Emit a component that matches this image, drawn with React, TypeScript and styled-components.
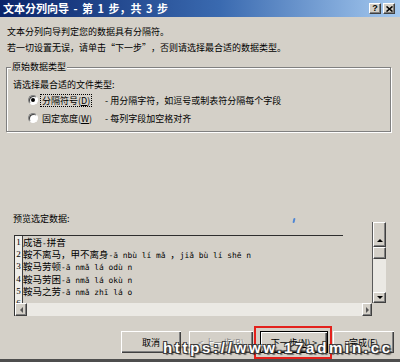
import React from "react";
import styled, { createGlobalStyle } from "styled-components";

const Global = createGlobalStyle`
  html, body { margin: 0; padding: 0; background: #d4d0c8; }
  body { font-family: "Noto Sans CJK SC", "Liberation Sans", sans-serif; }
`;

const Window = styled.div`
  position: relative;
  width: 400px;
  height: 362px;
  box-sizing: border-box;
  background: #d4d0c8;
  border-bottom: 3px solid #4e4e4e;
  display: flex;
  flex-direction: column;
  overflow: hidden;
  font-family: "Noto Sans CJK SC", "Liberation Sans", sans-serif;
  font-size: 9px;
  color: #000;
`;

const TitleBar = styled.div`
  height: 17px;
  flex: none;
  display: flex;
  align-items: center;
  padding: 0 5px 0 3px;
  background: linear-gradient(to right, #0a246a 0%, #3a6ab0 55%, #a6caf0 100%);
`;

const TitleText = styled.div`
  flex: 1;
  color: #fff;
  font-weight: 700;
  font-size: 11px;
  line-height: 17px;
  word-spacing: 2px;
  white-space: nowrap;
`;

const CaptionButtons = styled.div`
  display: flex;
  gap: 2px;
`;

const CaptionButton = styled.div`
  width: 12px;
  height: 11px;
  box-sizing: border-box;
  background: #d4d0c8;
  border: 1px solid;
  border-color: #fff #404040 #404040 #fff;
  box-shadow: inset -1px -1px 0 #808080;
  display: flex;
  align-items: center;
  justify-content: center;
  font-family: "Liberation Sans", sans-serif;
  font-weight: 700;
  font-size: 9px;
  line-height: 1;
  color: #000;
`;

const Intro = styled.div`
  margin-top: 7px;
  padding-left: 7px;
`;

const IntroLine = styled.div`
  line-height: 16px;
  height: 16px;
  white-space: nowrap;
`;

const Quote = styled.span<{ $open?: boolean }>`
  display: inline-block;
  width: 9px;
  text-align: ${(p) => (p.$open ? "right" : "left")};
`;

const GroupBox = styled.div`
  position: relative;
  margin: 11px 0 0 6px;
  width: 385px;
  height: 65px;
  box-sizing: border-box;
  border: 1px solid #808080;
  box-shadow: inset 1px 1px 0 #fff, 1px 1px 0 #fff;
  padding: 9px 0 0 6px;
`;

const Legend = styled.div`
  position: absolute;
  top: -7px;
  left: 4px;
  padding: 0 1px;
  background: #d4d0c8;
  line-height: 12px;
`;

const GroupLabel = styled.div`
  line-height: 16px;
  height: 16px;
`;

const RadioList = styled.div`
  margin-top: -2px;
`;

const RadioRow = styled.div`
  height: 18px;
  display: flex;
  align-items: center;
  padding-left: 15px;
  white-space: nowrap;
`;

const Radio = styled.span<{ $checked?: boolean }>`
  position: relative;
  width: 10px;
  height: 10px;
  box-sizing: border-box;
  border-radius: 50%;
  background: #fff;
  border: 1px solid;
  border-color: #808080 #fff #fff #808080;
  box-shadow: inset 1px 1px 0 #404040;
  flex: none;
  &::after {
    content: "";
    display: ${(p) => (p.$checked ? "block" : "none")};
    position: absolute;
    left: 2px;
    top: 2px;
    width: 4px;
    height: 4px;
    border-radius: 50%;
    background: #000;
  }
`;

const RadioLabelCell = styled.span`
  width: 65px;
  margin-left: 2px;
  flex: none;
  display: flex;
  align-items: center;
`;

const RadioLabel = styled.span<{ $focused?: boolean }>`
  display: inline-block;
  padding: 0 1px;
  height: 11px;
  line-height: 11px;
  border: 1px dotted ${(p) => (p.$focused ? "#000" : "transparent")};
`;

const Accel = styled.span`
  text-decoration: underline;
`;

const PreviewLabelRow = styled.div`
  position: relative;
  margin-top: 82px;
  height: 8px;
  line-height: 10px;
  padding-left: 13px;
`;

const Speck = styled.span`
  position: absolute;
  left: 293px;
  top: 4px;
  width: 2px;
  height: 5px;
  background: #4f86d4;
  border-radius: 1px;
  transform: skewX(-12deg);
`;

const PreviewBox = styled.div`
  margin-left: 14px;
  width: 372px;
  height: 94px;
  display: grid;
  grid-template-columns: 358px 14px;
  grid-template-rows: 81px 13px;
`;

const DataArea = styled.div`
  display: flex;
  flex-direction: column;
  overflow: hidden;
`;

const Ruler = styled.div`
  height: 13px;
  flex: none;
`;

const RulerLine = styled.div`
  width: 329px;
  height: 1px;
  background: #2e2e2e;
  flex: none;
`;

const Rows = styled.div`
  flex: 1;
  border-left: 1px solid #333;
  overflow: hidden;
`;

const Row = styled.div`
  height: 12.4px;
  display: flex;
  align-items: center;
  white-space: nowrap;
`;

const RowNum = styled.span`
  width: 7px;
  height: 100%;
  flex: none;
  box-sizing: content-box;
  background: #eeede9;
  border-right: 1px solid #404040;
  border-bottom: 1px solid #7a7a7a;
  font-family: "Liberation Serif", serif;
  font-size: 9px;
  line-height: 12px;
  text-align: center;
`;

const RowText = styled.span`
  display: inline-flex;
  align-items: baseline;
  line-height: 12px;
  padding-top: 1px;
`;

const Han = styled.span`
  font-family: "Noto Sans CJK SC", sans-serif;
  font-size: 9.5px;
`;

const Lat = styled.span`
  font-family: "DejaVu Sans Mono", "Liberation Mono", monospace;
  font-size: 7.9px;
  white-space: pre;
`;

const raised = `
  background: #d4d0c8;
  box-sizing: border-box;
  border: 1px solid;
  border-color: #fff #404040 #404040 #fff;
  box-shadow: inset -1px -1px 0 #808080;
`;

const VScroll = styled.div`
  display: flex;
  flex-direction: column;
  border-left: 1px solid #5a5a5a;
`;

const ScrollBtn = styled.div<{ $h: number; $align?: string }>`
  ${raised}
  height: ${(p) => p.$h}px;
  flex: none;
  display: flex;
  align-items: ${(p) => p.$align || "center"};
  justify-content: center;
  padding-bottom: ${(p) => (p.$align === "flex-end" ? "4px" : "0")};
`;

const Track = styled.div`
  flex: 1;
  background: #ebe9e4;
`;

const Arrow = styled.span<{ $dir: "up" | "down" | "left" | "right" }>`
  width: 0;
  height: 0;
  border-style: solid;
  ${(p) =>
    p.$dir === "up"
      ? "border-width: 0 3px 3px 3px; border-color: transparent transparent #000 transparent;"
      : p.$dir === "down"
      ? "border-width: 3px 3px 0 3px; border-color: #000 transparent transparent transparent;"
      : p.$dir === "left"
      ? "border-width: 3px 3px 3px 0; border-color: transparent #555 transparent transparent;"
      : "border-width: 3px 0 3px 3px; border-color: transparent transparent transparent #555;"}
`;

const HScroll = styled.div`
  display: flex;
  border-left: 1px solid #333;
`;

const HBtn = styled.div<{ $w: number }>`
  ${raised}
  width: ${(p) => p.$w}px;
  flex: none;
  display: flex;
  align-items: center;
  justify-content: center;
`;

const Corner = styled.div`
  background: #d4d0c8;
`;

const ButtonRow = styled.div`
  margin-top: 10px;
  padding-left: 121px;
  display: flex;
  align-items: flex-start;
`;

const PushButton = styled.div<{ $w: number; $ml?: number; $disabled?: boolean; $default?: boolean }>`
  width: ${(p) => p.$w}px;
  height: 22px;
  margin-left: ${(p) => p.$ml || 0}px;
  margin-top: ${(p) => (p.$default ? 0 : 5)}px;
  box-sizing: border-box;
  background: #d4d0c8;
  border: ${(p) => (p.$default ? "1px solid #000" : "none")};
  box-shadow: inset 1px 1px 0 #fff, inset -1px -1px 0 #404040, inset -2px -2px 0 #808080;
  display: flex;
  align-items: center;
  justify-content: center;
  white-space: nowrap;
  font-size: 9px;
  color: ${(p) => (p.$disabled ? "#8a8a8a" : "#000")};
  text-shadow: ${(p) => (p.$disabled ? "1px 1px 0 #fff" : "none")};
`;

const HighlightFrame = styled.div`
  margin-left: 1px;
  padding: 3px 2px 4px 4px;
  border: 2px solid #e3211c;
`;

const Watermark = styled.div`
  position: absolute;
  left: 163px;
  top: 340px;
  font-family: "Liberation Sans", Arial, sans-serif;
  font-weight: 700;
  font-size: 15px;
  line-height: 15px;
  letter-spacing: 2.7px;
  color: #fff;
  white-space: nowrap;
  text-shadow: 1px 1px 0 #3a3a3a, -1px -1px 0 #3a3a3a, 1px -1px 0 #3a3a3a, -1px 1px 0 #3a3a3a,
    2px 2px 1px rgba(0, 0, 0, 0.5);
`;

const HAN_RE = /[\u3000-\u9fff\uff00-\uffef]+|[^\u3000-\u9fff\uff00-\uffef]+/g;

function Mixed({ text }: { text: string }) {
  const parts = text.match(HAN_RE) || [];
  return (
    <RowText>
      {parts.map((p, i) =>
        /[\u3000-\u9fff\uff00-\uffef]/.test(p) ? <Han key={i}>{p}</Han> : <Lat key={i}>{p}</Lat>
      )}
    </RowText>
  );
}

const rows = [
  "成语-拼音",
  "鞍不离马，甲不离身-ā nbù lí mǎ ，jiǎ bù lí shē n",
  "鞍马劳顿-ā nmǎ lá odù n",
  "鞍马劳困-ā nmǎ lá okù n",
  "鞍马之劳-ā nmǎ zhī lá o",
  "",
];

export default function App() {
  return (
    <Window>
      <Global />
      <TitleBar>
        <TitleText>文本分列向导 - 第 1 步，共 3 步</TitleText>
        <CaptionButtons>
          <CaptionButton>?</CaptionButton>
          <CaptionButton>
            <svg width="7" height="6" viewBox="0 0 7 6">
              <path d="M0.5 0.5 L6.5 5.5 M6.5 0.5 L0.5 5.5" stroke="#000" strokeWidth="1.6" />
            </svg>
          </CaptionButton>
        </CaptionButtons>
      </TitleBar>

      <Intro>
        <IntroLine>文本分列向导判定您的数据具有分隔符。</IntroLine>
        <IntroLine>
          若一切设置无误，请单击<Quote $open>“</Quote>下一步<Quote>”</Quote>，否则请选择最合适的数据类型。
        </IntroLine>
      </Intro>

      <GroupBox>
        <Legend>原始数据类型</Legend>
        <GroupLabel>请选择最合适的文件类型:</GroupLabel>
        <RadioList>
          <RadioRow>
            <Radio $checked />
            <RadioLabelCell>
              <RadioLabel $focused>
                分隔符号(<Accel>D</Accel>)
              </RadioLabel>
            </RadioLabelCell>
            <span>- 用分隔字符，如逗号或制表符分隔每个字段</span>
          </RadioRow>
          <RadioRow>
            <Radio />
            <RadioLabelCell>
              <RadioLabel>
                固定宽度(<Accel>W</Accel>)
              </RadioLabel>
            </RadioLabelCell>
            <span>- 每列字段加空格对齐</span>
          </RadioRow>
        </RadioList>
      </GroupBox>

      <PreviewLabelRow>
        预览选定数据:
        <Speck />
      </PreviewLabelRow>

      <PreviewBox>
        <DataArea>
          <Ruler />
          <RulerLine />
          <Rows>
            {rows.map((r, i) => (
              <Row key={i}>
                <RowNum>{i + 1}</RowNum>
                <Mixed text={r} />
              </Row>
            ))}
          </Rows>
        </DataArea>
        <VScroll>
          <ScrollBtn $h={25} $align="flex-end">
            <Arrow $dir="up" />
          </ScrollBtn>
          <ScrollBtn $h={12} />
          <Track />
          <ScrollBtn $h={11}>
            <Arrow $dir="down" />
          </ScrollBtn>
        </VScroll>
        <HScroll>
          <HBtn $w={12}>
            <Arrow $dir="left" />
          </HBtn>
          <Track />
          <HBtn $w={10}>
            <Arrow $dir="right" />
          </HBtn>
        </HScroll>
        <Corner />
      </PreviewBox>

      <ButtonRow>
        <PushButton $w={60}>取消</PushButton>
        <PushButton $w={64} $ml={8} $disabled>
          &lt; 上一步(<Accel>B</Accel>)
        </PushButton>
        <HighlightFrame>
          <PushButton $w={68} $default>
            下一步(<Accel>N</Accel>) &gt;
          </PushButton>
        </HighlightFrame>
        <PushButton $w={61} $ml={1}>
          完成(<Accel>F</Accel>)
        </PushButton>
      </ButtonRow>

      <Watermark>https://www.17admin.cc</Watermark>
    </Window>
  );
}
